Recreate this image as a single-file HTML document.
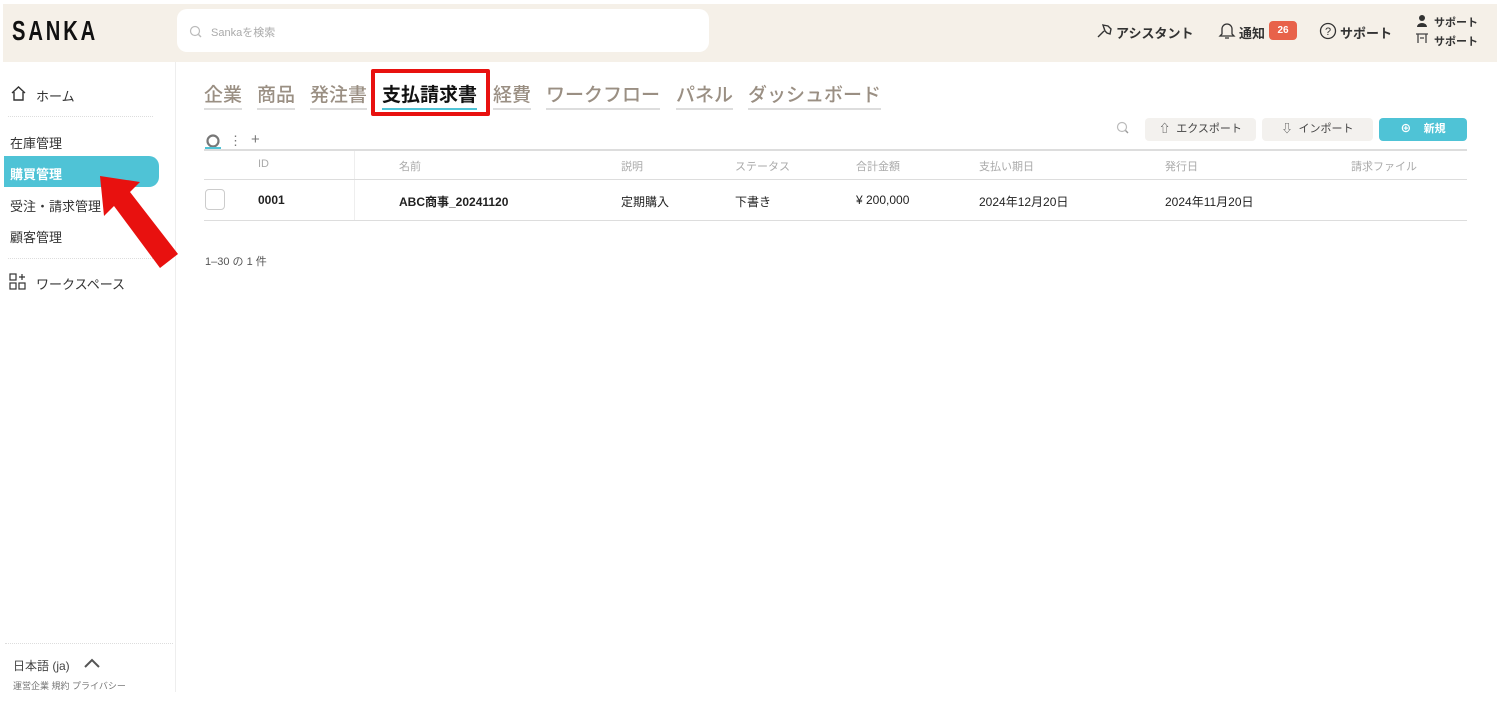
<!DOCTYPE html>
<html><head><meta charset="utf-8"><style>
*{margin:0;padding:0;box-sizing:border-box}
body{width:1500px;height:704px;background:#fff;font-family:"Liberation Sans","Noto Sans CJK JP",sans-serif;color:#222;position:relative;overflow:hidden}
.a{position:absolute;white-space:nowrap}
.hdr{left:3px;top:4px;width:1494px;height:58px;background:#f5f0e8}
.logo{left:12px;top:15px;font-size:28px;font-weight:bold;letter-spacing:4px;color:#111;transform:scaleX(0.72);transform-origin:left top}
.search{left:177px;top:9px;width:532px;height:43px;background:#fff;border-radius:10px}
.hi{font-size:13px;font-weight:bold;color:#333}
.side{left:175px;top:62px;width:1px;height:630px;background:#eee}
.nav{font-size:13px;color:#333}
.dash{height:0;border-top:1px dotted #ddd}
.tab{top:80px;font-size:19px;color:#9a8f83;font-weight:500;border-bottom:2px solid #ddd;padding-bottom:1px}
.th{top:158px;font-size:11px;color:#aaa}
.td{top:193px;font-size:12px;color:#222}
.btn{top:118px;height:23px;background:#f3f1ee;border-radius:4px;font-size:11px;color:#444;line-height:23px;text-align:center}
</style></head><body>
<div class="a hdr"></div>
<div class="a logo">SANKA</div>
<div class="a search"></div>
<svg class="a" style="left:189px;top:25px" width="14" height="14" viewBox="0 0 14 14"><circle cx="6" cy="6" r="4.5" fill="none" stroke="#bbb" stroke-width="1.2"/><path d="M9.5 9.5L12 12" stroke="#bbb" stroke-width="1.4"/></svg>
<div class="a" style="left:211px;top:24px;font-size:11px;color:#aaa">Sankaを検索</div>
<svg class="a" style="left:1096px;top:22px" width="17" height="17" viewBox="0 0 17 17"><path d="M2 15L8 9M7 3l5 1 3 3-1 5-3-1-2-2z" fill="none" stroke="#333" stroke-width="1.4"/></svg>
<div class="a hi" style="left:1116px;top:23px">アシスタント</div>
<svg class="a" style="left:1218px;top:21px" width="18" height="19" viewBox="0 0 18 19"><path d="M4 13V8a5 5 0 0110 0v5l2 2H2z M7 17h4" fill="none" stroke="#333" stroke-width="1.3"/></svg>
<div class="a hi" style="left:1239px;top:23px">通知</div>
<div class="a" style="left:1269px;top:21px;width:28px;height:19px;background:#e8624a;border-radius:4px;color:#fff;font-size:10px;font-weight:bold;text-align:center;line-height:19px">26</div>
<svg class="a" style="left:1319px;top:22px" width="18" height="18" viewBox="0 0 18 18"><circle cx="9" cy="9" r="7.5" fill="none" stroke="#333" stroke-width="1.3"/><text x="9" y="13" font-size="11" text-anchor="middle" fill="#333" font-family="Liberation Sans">?</text></svg>
<div class="a hi" style="left:1340px;top:23px">サポート</div>
<svg class="a" style="left:1415px;top:14px" width="14" height="34" viewBox="0 0 14 34"><circle cx="7" cy="4" r="3" fill="#333"/><path d="M2 13a5 4 0 0110 0z" fill="#333"/><path d="M1 20h12M3 20v9M11 20v9M5 24h4" stroke="#444" stroke-width="1.3" fill="none"/></svg>
<div class="a" style="left:1434px;top:14px;font-size:11px;font-weight:bold;color:#333">サポート</div>
<div class="a" style="left:1434px;top:33px;font-size:11px;font-weight:bold;color:#333">サポート</div>

<div class="a side"></div>
<svg class="a" style="left:10px;top:85px" width="17" height="17" viewBox="0 0 17 17"><path d="M2 8L8.5 2 15 8M4 7v8h9V7" fill="none" stroke="#333" stroke-width="1.4"/></svg>
<div class="a nav" style="left:36px;top:86px">ホーム</div>
<div class="a dash" style="left:8px;top:116px;width:145px"></div>
<div class="a nav" style="left:10px;top:133px">在庫管理</div>
<div class="a" style="left:4px;top:156px;width:155px;height:31px;background:#4fc3d6;border-radius:0 10px 10px 0"></div>
<div class="a nav" style="left:10px;top:164px;color:#fff;font-weight:bold">購買管理</div>
<div class="a nav" style="left:10px;top:196px">受注・請求管理</div>
<div class="a nav" style="left:10px;top:227px">顧客管理</div>
<div class="a dash" style="left:8px;top:258px;width:145px"></div>
<svg class="a" style="left:9px;top:273px" width="18" height="18" viewBox="0 0 18 18"><rect x="1" y="1" width="6" height="6" fill="none" stroke="#333" stroke-width="1.2"/><rect x="1" y="10" width="6" height="6" fill="none" stroke="#333" stroke-width="1.2"/><rect x="10" y="10" width="6" height="6" fill="none" stroke="#333" stroke-width="1.2"/><path d="M13 1v6M10 4h6" stroke="#333" stroke-width="1.2"/></svg>
<div class="a nav" style="left:36px;top:274px">ワークスペース</div>
<svg class="a" style="left:92px;top:170px" width="95" height="100" viewBox="0 0 95 100"><polygon points="8,6 48,12 38,22 86,84 68,98 22,36 12,46" fill="#e8110f"/></svg>
<div class="a dash" style="left:5px;top:643px;width:168px"></div>
<div class="a" style="left:13px;top:657px;font-size:12px;color:#444">日本語 (ja)</div>
<svg class="a" style="left:83px;top:657px" width="18" height="12" viewBox="0 0 18 12"><path d="M2 10L9 3l7 7" fill="none" stroke="#555" stroke-width="2"/></svg>
<div class="a" style="left:13px;top:679px;font-size:9px;color:#777">運営企業 規約 プライバシー</div>

<div class="a tab" style="left:204px">企業</div>
<div class="a tab" style="left:257px">商品</div>
<div class="a tab" style="left:310px">発注書</div>
<div class="a" style="left:371px;top:69px;width:119px;height:47px;border:4px solid #e8110f;border-radius:2px"></div>
<div class="a tab" style="left:382px;color:#111;font-weight:bold;border-bottom-color:#4fc3d6">支払請求書</div>
<div class="a tab" style="left:493px">経費</div>
<div class="a tab" style="left:546px">ワークフロー</div>
<div class="a tab" style="left:676px">パネル</div>
<div class="a tab" style="left:748px">ダッシュボード</div>

<svg class="a" style="left:205px;top:133px" width="18" height="16" viewBox="0 0 18 16"><circle cx="8" cy="8" r="5.5" fill="none" stroke="#777" stroke-width="2.2"/></svg>
<div class="a" style="left:205px;top:147px;width:16px;height:2px;background:#4fc3d6"></div>
<div class="a" style="left:229px;top:133px;font-size:13px;color:#777">⋮</div>
<div class="a" style="left:251px;top:131px;font-size:15px;color:#777">+</div>
<svg class="a" style="left:1116px;top:121px" width="15" height="15" viewBox="0 0 15 15"><circle cx="6" cy="6" r="4.5" fill="none" stroke="#bbb" stroke-width="1.2"/><path d="M9.5 9.5L12 12" stroke="#999" stroke-width="1.4"/></svg>
<div class="a btn" style="left:1145px;width:111px">⇧&nbsp; エクスポート</div>
<div class="a btn" style="left:1262px;width:111px">⇩&nbsp; インポート</div>
<div class="a btn" style="left:1379px;width:88px;background:#4fc3d6;color:#fff;font-weight:bold">⊕&nbsp;&nbsp;&nbsp; 新規</div>

<div class="a" style="left:204px;top:149px;width:1263px;height:2px;background:#ddd"></div>
<div class="a" style="left:354px;top:151px;width:1px;height:70px;background:#eee"></div>
<div class="a th" style="left:258px">ID</div>
<div class="a th" style="left:399px">名前</div>
<div class="a th" style="left:621px">説明</div>
<div class="a th" style="left:735px">ステータス</div>
<div class="a th" style="left:856px">合計金額</div>
<div class="a th" style="left:979px">支払い期日</div>
<div class="a th" style="left:1165px">発行日</div>
<div class="a th" style="left:1351px">請求ファイル</div>
<div class="a" style="left:204px;top:179px;width:1263px;height:1px;background:#ddd"></div>
<div class="a" style="left:205px;top:189px;width:20px;height:21px;border:1px solid #ccc;border-radius:4px"></div>
<div class="a td" style="left:258px;font-weight:bold">0001</div>
<div class="a td" style="left:399px;font-weight:bold">ABC商事_20241120</div>
<div class="a td" style="left:621px">定期購入</div>
<div class="a td" style="left:735px">下書き</div>
<div class="a td" style="left:856px">¥ 200,000</div>
<div class="a td" style="left:979px">2024年12月20日</div>
<div class="a td" style="left:1165px">2024年11月20日</div>
<div class="a" style="left:204px;top:220px;width:1263px;height:1px;background:#ddd"></div>
<div class="a" style="left:205px;top:253px;font-size:11px;color:#555">1–30 の 1 件</div>
</body></html>
